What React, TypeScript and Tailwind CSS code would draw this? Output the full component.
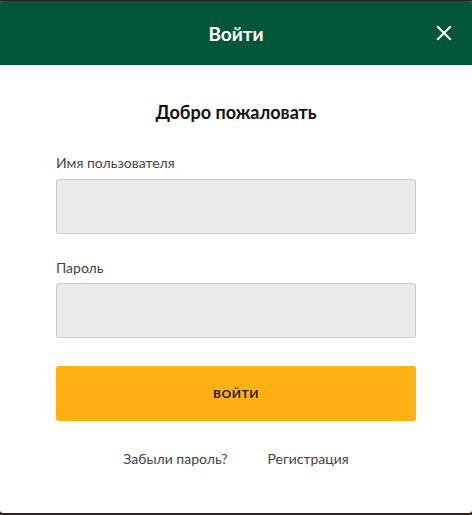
import React from "react";

export default function App() {
  return (
    <div className="w-[472px] h-[515px] bg-[#2a241c] pt-px overflow-hidden" style={{ fontFamily: "Lato, 'Noto Sans', sans-serif" }}>
      <div className="w-[472px] h-[512px] bg-white rounded-[3px] overflow-hidden flex flex-col">
        <div className="h-[64px] bg-[#02573a] flex items-center justify-center relative">
          <span className="text-white text-[19px] font-bold leading-none">Войти</span>
          <button className="absolute right-[20px] top-[24px] w-[16px] h-[16px] flex items-center justify-center">
            <svg width="16" height="16" viewBox="0 0 16 16" fill="none">
              <path d="M2 2L14 14M14 2L2 14" stroke="white" strokeWidth="2" strokeLinecap="square" />
            </svg>
          </button>
        </div>
        <div className="px-[56px] flex flex-col">
          <h2 className="mt-[37px] h-[20px] leading-[20px] text-center text-[18px] font-bold text-[#111]">Добро пожаловать</h2>
          <label className="mt-[33px] h-[16px] leading-[16px] text-[14px] text-[#444]">Имя пользователя</label>
          <div className="mt-[8px] h-[55px] bg-[#ebebeb] border border-[#c9c9c9] rounded-[3px]" />
          <label className="mt-[26px] h-[16px] leading-[16px] text-[14px] text-[#444]">Пароль</label>
          <div className="mt-[7px] h-[55px] bg-[#ebebeb] border border-[#c9c9c9] rounded-[3px]" />
          <button className="mt-[28px] h-[55px] bg-[#ffb111] rounded-[3px] text-[12px] font-bold tracking-[0.5px] text-[#1a1a1a]">ВОЙТИ</button>
          <div className="mt-[30px] h-[16px] leading-[16px] flex justify-center gap-[40px] text-[14px] text-[#444]">
            <span>Забыли пароль?</span>
            <span>Регистрация</span>
          </div>
        </div>
      </div>
    </div>
  );
}
